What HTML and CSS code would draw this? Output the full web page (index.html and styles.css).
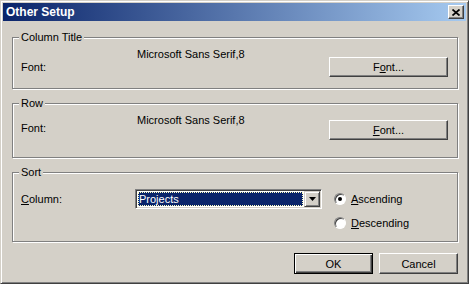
FILE: index.html
```html
<!DOCTYPE html>
<html lang="en">
<head>
    <meta charset="UTF-8">
    <title>Other Setup</title>
    <link rel="stylesheet" href="styles.css">
</head>
<body>
<div class="window">
    <div class="titlebar">
        <span class="title">Other Setup</span>
        <span class="close-btn">
            <svg width="8" height="7" viewBox="0 0 8 7"><path d="M0.5 0.5L7.5 6.5M7.5 0.5L0.5 6.5" stroke="#000" stroke-width="1.7"/></svg>
        </span>
    </div>
    <div class="content">
        <div class="groups">
            <div class="group group-title">
                <span class="group-label">Column Title</span>
                <div class="font-row">
                    <span class="font-value">Microsoft Sans Serif,8</span>
                    <span class="font-label">Font:</span>
                    <button class="btn font-btn">F<u>o</u>nt...</button>
                </div>
            </div>
            <div class="group group-row">
                <span class="group-label">Row</span>
                <div class="font-row">
                    <span class="font-value">Microsoft Sans Serif,8</span>
                    <span class="font-label">Font:</span>
                    <button class="btn font-btn"><u>F</u>ont...</button>
                </div>
            </div>
            <div class="group group-sort">
                <span class="group-label">Sort</span>
                <div class="sort-grid">
                    <span class="sort-label"><u>C</u>olumn:</span>
                    <div class="combo">
                        <span class="combo-value">Projects</span>
                        <span class="combo-btn">
                            <svg width="7" height="4" viewBox="0 0 7 4"><polygon points="0,0 7,0 3.5,4" fill="#000"/></svg>
                        </span>
                    </div>
                    <label class="radio">
                        <span class="radio-circle"><span class="radio-dot"></span></span>
                        <span><u>A</u>scending</span>
                    </label>
                    <label class="radio radio-second">
                        <span class="radio-circle"></span>
                        <span><u>D</u>escending</span>
                    </label>
                </div>
            </div>
        </div>
        <div class="footer">
            <button class="btn btn-default">OK</button>
            <button class="btn">Cancel</button>
        </div>
    </div>
</div>
</body>
</html>
```

FILE: styles.css
```css
body {
    margin: 0;
    font-family: "Liberation Sans", Arial, sans-serif;
    font-size: 11px;
    color: #000;
}

.window {
    width: 469px;
    height: 284px;
    box-sizing: border-box;
    background: #d4d0c8;
    border: 1px solid;
    border-color: #d4d0c8 #404040 #404040 #d4d0c8;
    padding: 2px;
    box-shadow: inset 1px 1px #fff, inset -1px -1px #808080;
    display: flex;
    flex-direction: column;
}

.titlebar {
    height: 18px;
    display: flex;
    align-items: center;
    justify-content: space-between;
    padding: 0 2px 0 3px;
    background: linear-gradient(to right, #0a246a, #a6caf0);
}

.title {
    color: #fff;
    font-weight: bold;
    font-size: 12px;
}

.close-btn {
    width: 16px;
    height: 14px;
    box-sizing: border-box;
    background: #d4d0c8;
    border: 1px solid;
    border-color: #fff #404040 #404040 #fff;
    box-shadow: inset -1px -1px #808080;
    display: flex;
    align-items: center;
    justify-content: center;
}

.content {
    flex: 1;
    padding: 16px 8px 0 9px;
}

.groups {
    display: flex;
    flex-direction: column;
    gap: 14px;
}

.group {
    position: relative;
    box-sizing: border-box;
    border: 1px solid #808080;
    box-shadow: inset 1px 1px #fff, 1px 1px #fff;
    padding: 0 9px 0 8px;
}

.group-label {
    position: absolute;
    top: -7px;
    left: 6px;
    padding: 0 2px;
    background: #d4d0c8;
    line-height: 13px;
}

.group-title {
    height: 52px;
    padding-top: 10px;
}

.group-row {
    height: 55px;
    padding-top: 10px;
}

.group-sort {
    height: 70px;
    padding-top: 16px;
}

.font-row {
    display: grid;
    grid-template-columns: 116px 1fr 119px;
    grid-template-rows: 9px 20px;
    line-height: 13px;
}

.group-row .font-row {
    grid-template-rows: 6px 20px;
}

.font-value {
    grid-column: 2;
    grid-row: 1;
    align-self: start;
    white-space: nowrap;
}

.font-label {
    grid-column: 1;
    grid-row: 2;
    align-self: center;
}

.group-row .font-label {
    margin-bottom: 4px;
}

.font-btn {
    grid-column: 3;
    grid-row: 2;
}

.btn {
    font: inherit;
    color: #000;
    background: #d4d0c8;
    height: 20px;
    box-sizing: border-box;
    border: 1px solid;
    border-color: #fff #404040 #404040 #fff;
    box-shadow: inset -1px -1px #808080;
    padding: 0;
    text-align: center;
    line-height: 16px;
}

.btn-default {
    border-color: #000;
    box-shadow: inset 1px 1px #fff, inset -1px -1px #404040, inset -2px -2px #808080;
}

.sort-grid {
    display: grid;
    grid-template-columns: 114px 187px auto;
    grid-template-rows: 20px 14px;
    row-gap: 7px;
    line-height: 13px;
}

.sort-label {
    align-self: center;
}

.combo {
    display: flex;
    box-sizing: border-box;
    height: 20px;
    border: 1px solid;
    border-color: #808080 #fff #fff #808080;
    box-shadow: inset 1px 1px #404040, inset -1px -1px #d4d0c8;
    padding: 1px;
    background: #fff;
}

.combo-value {
    flex: 1;
    margin: 1px;
    padding-left: 1px;
    background: #0a246a;
    color: #fff;
    line-height: 14px;
    outline: 1px dotted #ffffc0;
    outline-offset: -1px;
}

.combo-btn {
    width: 16px;
    height: 16px;
    box-sizing: border-box;
    background: #d4d0c8;
    border: 1px solid;
    border-color: #d4d0c8 #404040 #404040 #d4d0c8;
    box-shadow: inset 1px 1px #fff, inset -1px -1px #808080;
    display: flex;
    align-items: center;
    justify-content: center;
}

.radio {
    grid-column: 3;
    display: flex;
    align-items: center;
    gap: 5px;
    margin-left: 12px;
}

.radio-second {
    grid-row: 2;
}

.radio-circle {
    width: 12px;
    height: 12px;
    box-sizing: border-box;
    border-radius: 50%;
    background: #fff;
    border: 1px solid;
    border-color: #808080 #fff #fff #808080;
    box-shadow: inset 1px 1px #404040;
    display: flex;
    align-items: center;
    justify-content: center;
}

.radio-dot {
    width: 4px;
    height: 4px;
    border-radius: 50%;
    background: #000;
}

.footer {
    display: flex;
    justify-content: flex-end;
    gap: 6px;
    margin-top: 11px;
}

.footer .btn {
    width: 79px;
    height: 21px;
}
```
